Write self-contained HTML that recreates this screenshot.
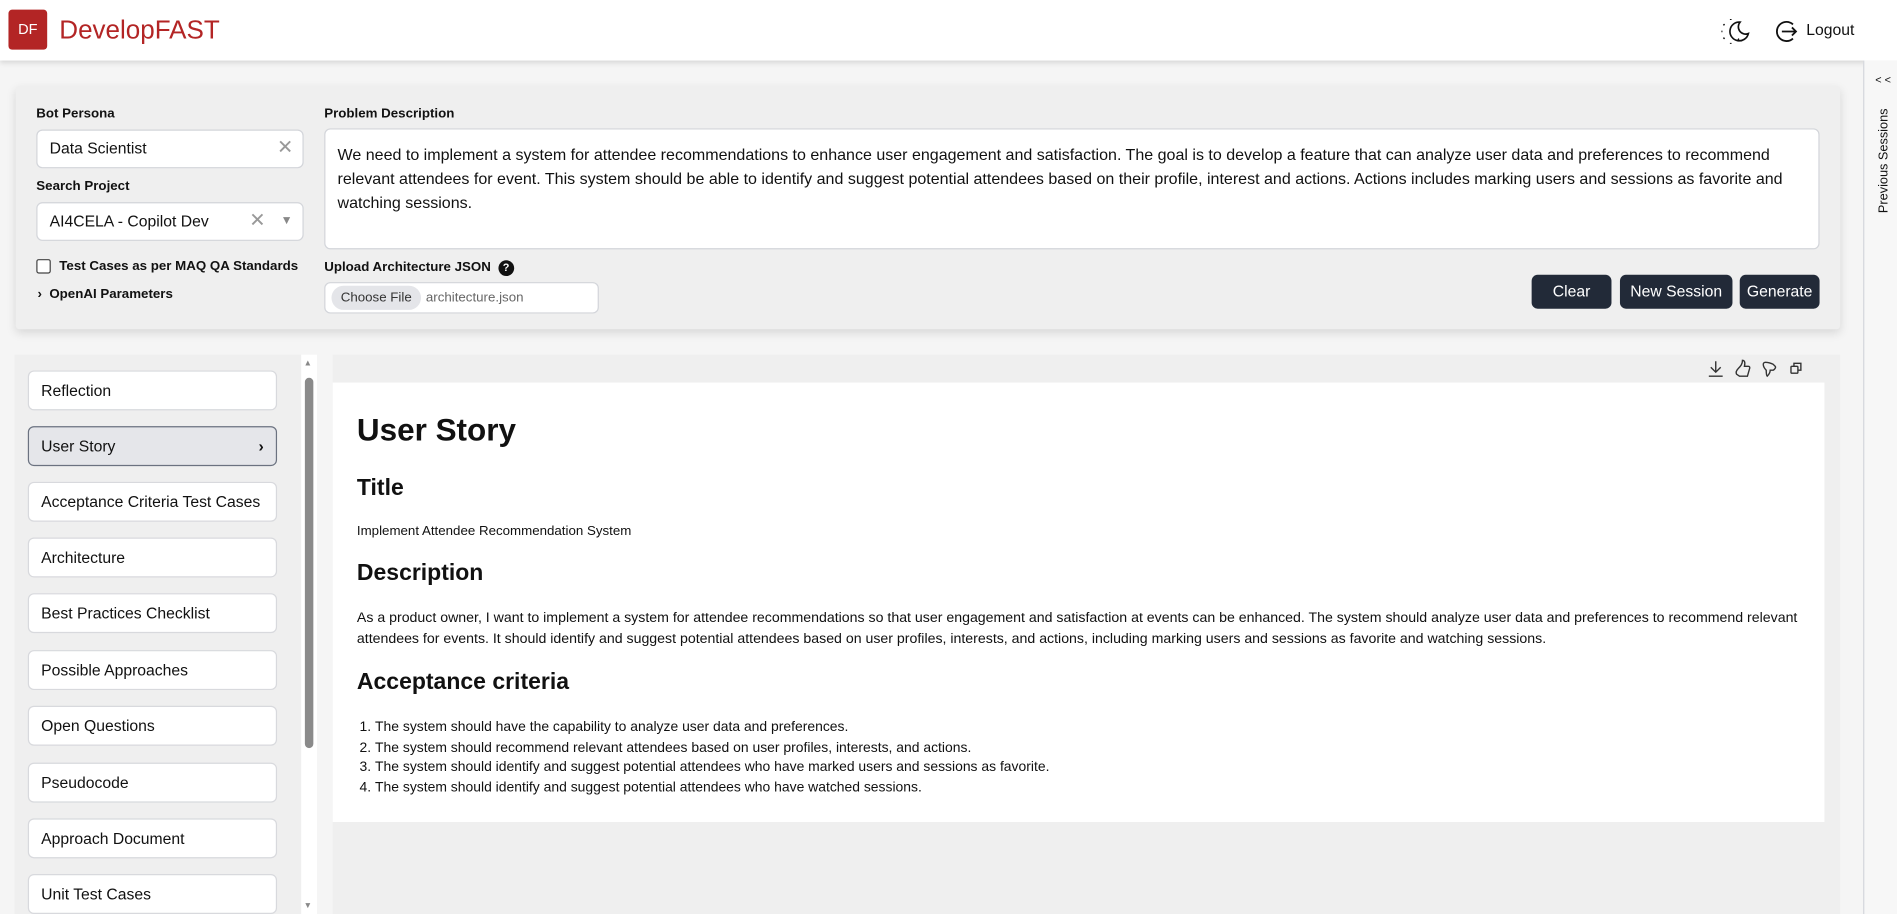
<!DOCTYPE html>
<html><head><meta charset="utf-8"><style>
*{box-sizing:border-box;margin:0;padding:0}
html,body{width:1897px;height:914px;overflow:hidden;background:#f5f5f5}
#w{position:absolute;left:0;top:0;width:1568px;height:755px;transform:scale(1.20982,1.2106);transform-origin:0 0;font-family:"Liberation Sans",sans-serif;color:#111;background:#f5f5f5}
.abs{position:absolute}
.hdr{left:0;top:0;width:1568px;height:50px;background:#fff;box-shadow:0 2px 4px rgba(0,0,0,.12)}
.logo{left:7px;top:8px;width:32px;height:33px;background:#b32525;border-radius:3px;color:#fff;font-size:12px;line-height:33px;text-align:center}
.brand{left:49px;top:9px;font-size:21.5px;color:#b32525;line-height:32px}
.side{left:1540px;top:50px;width:28px;height:705px;background:#f7f7f7;border-left:1px solid #d4d6dc}
.panel{left:13px;top:71px;width:1508px;height:201px;background:#efefef;box-shadow:0 3px 8px rgba(0,0,0,.12);border-radius:3px}
.lbl{font-size:11px;font-weight:bold;color:#111;white-space:nowrap}
.inp{background:#fff;border:1px solid #d3d5da;border-radius:5px;font-size:13px;padding-left:10px;line-height:37px;white-space:nowrap}
.btn{background:#222a38;color:#fff;border-radius:5px;font-size:13px;text-align:center;line-height:28px}
.left{left:12px;top:293px;width:237px;height:462px;background:#efefef}
.item{position:absolute;left:11px;width:206px;height:33px;background:#fff;border:1px solid #d8d9dd;border-radius:5px;font-size:13px;line-height:31px;padding-left:10px;color:#111;white-space:nowrap}
.sb{left:249px;top:293px;width:13px;height:462px;background:#fff}
.main{left:275px;top:293px;width:1246px;height:462px;background:#efefef}
.card{left:275px;top:316px;width:1233px;height:363px;background:#fff}
.card p,.card li{font-size:11px;line-height:16.5px;white-space:nowrap}
</style></head><body><div id="w">
<div class="abs hdr"></div>
<div class="abs logo">DF</div>
<div class="abs brand">DevelopFAST</div>
<svg class="abs" style="left:1421px;top:14px" width="26" height="24" viewBox="0 0 30 28" fill="none" stroke="#111" stroke-width="1.6">
<path d="M20 5a9 9 0 1 0 8 11a7 7 0 0 1-8-11z"/><path d="M11 2v1M11 25v1M2 14h1M4 7l1 1M4 21l1-1M18 21l1 1"/></svg>
<svg class="abs" style="left:1467px;top:16px" width="20" height="20" viewBox="0 0 24 24" fill="none" stroke="#111" stroke-width="1.8">
<path d="M18 5a9.5 9.5 0 1 0 0 14"/><path d="M7 12h14M17 8l4 4-4 4"/></svg>
<div class="abs" style="left:1493px;top:16px;font-size:13px;line-height:18px">Logout</div>

<div class="abs side"></div>
<div class="abs" style="left:1550px;top:61px;font-size:9px">&lt; &lt;</div>
<div class="abs" style="left:1551px;top:176px;transform:rotate(-90deg);transform-origin:0 0;font-size:10.5px;white-space:nowrap">Previous Sessions</div>

<div class="abs panel"></div>
<div class="abs lbl" style="left:30px;top:88px">Bot Persona</div>
<div class="abs inp" style="left:30px;top:107px;width:221px;height:32px;line-height:30px">Data Scientist<span style="position:absolute;left:198px;top:0;color:#999;font-size:16px">✕</span></div>
<div class="abs lbl" style="left:30px;top:148px">Search Project</div>
<div class="abs inp" style="left:30px;top:167px;width:221px;height:32px;line-height:30px">AI4CELA - Copilot Dev<span style="position:absolute;left:175px;top:0;color:#999;font-size:16px">✕</span><span style="position:absolute;left:201px;top:0;color:#888;font-size:10px">▼</span></div>
<div class="abs" style="left:30px;top:214px;width:12px;height:12px;border:1.2px solid #444;border-radius:2px;background:#fff"></div>
<div class="abs lbl" style="left:49px;top:214px">Test Cases as per MAQ QA Standards</div>
<div class="abs lbl" style="left:31px;top:237px">›&nbsp; OpenAI Parameters</div>

<div class="abs lbl" style="left:268px;top:88px">Problem Description</div>
<div class="abs" style="left:268px;top:106px;width:1236px;height:100px;background:#fff;border:1px solid #d3d5da;border-radius:5px;padding:11px 0 0 10px;font-size:13.25px;line-height:20px;white-space:nowrap">We need to implement a system for attendee recommendations to enhance user engagement and satisfaction. The goal is to develop a feature that can analyze user data and preferences to recommend<br>relevant attendees for event. This system should be able to identify and suggest potential attendees based on their profile, interest and actions. Actions includes marking users and sessions as favorite and<br>watching sessions.</div>
<div class="abs lbl" style="left:268px;top:215px">Upload Architecture JSON <span style="display:inline-block;width:13px;height:13px;border-radius:50%;background:#111;color:#fff;font-size:9px;text-align:center;line-height:13px;margin-left:3px">?</span></div>
<div class="abs" style="left:268px;top:233px;width:227px;height:26px;background:#fff;border:1px solid #d3d5da;border-radius:5px"></div>
<div class="abs" style="left:274px;top:236px;width:74px;height:20px;background:#e4e5e9;border-radius:10px;font-size:11px;line-height:20px;text-align:center;color:#333">Choose File</div>
<div class="abs" style="left:352px;top:236px;font-size:11px;line-height:20px;color:#666">architecture.json</div>
<div class="abs btn" style="left:1266px;top:227px;width:66px;height:28px">Clear</div>
<div class="abs btn" style="left:1339px;top:227px;width:93px;height:28px">New Session</div>
<div class="abs btn" style="left:1438px;top:227px;width:66px;height:28px">Generate</div>

<div class="abs left">
<div class="item" style="top:13px">Reflection</div>
<div class="item" style="top:59px;background:#e5e6ea;border-color:#6b7280">User Story<span style="position:absolute;right:10px;top:0;font-weight:bold">›</span></div>
<div class="item" style="top:105px">Acceptance Criteria Test Cases</div>
<div class="item" style="top:151px">Architecture</div>
<div class="item" style="top:197px">Best Practices Checklist</div>
<div class="item" style="top:244px">Possible Approaches</div>
<div class="item" style="top:290px">Open Questions</div>
<div class="item" style="top:337px">Pseudocode</div>
<div class="item" style="top:383px">Approach Document</div>
<div class="item" style="top:429px">Unit Test Cases</div>
</div>
<div class="abs sb"><div style="position:absolute;left:3px;top:19px;width:7px;height:306px;background:#8a8a8a;border-radius:4px"></div>
<div style="position:absolute;left:2px;top:4px;font-size:7px;color:#888">▲</div><div style="position:absolute;left:2px;top:452px;font-size:7px;color:#888">▼</div></div>

<div class="abs main"></div>
<svg class="abs" style="left:1410px;top:295px" width="90" height="20" viewBox="0 0 110 24" fill="none" stroke="#333" stroke-width="1.4">
<path d="M10 4v11M5 10l5 5 5-5M3 19h14"/>
<path d="M33 11c2-2 4-4 4-8 2 0 3 2 2 6h4c1 0 2 1 1 3l-2 7h-8l-3-2c-1-2 0-4 2-6z"/>
<path d="M60 5c2 0 4 0 8 2l2 2c1 1 0 3-2 4h-3c0 2-1 4-3 6-1-1-1-3-1-6-2-2-3-4-3-6 0-1 1-2 2-2z"/>
<rect x="86" y="9" width="7" height="7" rx="1"/><path d="M89 9V6h7v7h-3"/></svg>
<div class="abs card">
<div style="position:absolute;left:20px;top:24px;font-size:26px;font-weight:bold">User Story</div>
<div style="position:absolute;left:20px;top:77px;font-size:19px;font-weight:bold">Title</div>
<p style="position:absolute;left:20px;top:115px">Implement Attendee Recommendation System</p>
<div style="position:absolute;left:20px;top:147px;font-size:19px;font-weight:bold">Description</div>
<p style="position:absolute;left:20px;top:187px;font-size:11.7px">As a product owner, I want to implement a system for attendee recommendations so that user engagement and satisfaction at events can be enhanced. The system should analyze user data and preferences to recommend relevant<br>attendees for events. It should identify and suggest potential attendees based on user profiles, interests, and actions, including marking users and sessions as favorite and watching sessions.</p>
<div style="position:absolute;left:20px;top:237px;font-size:19px;font-weight:bold">Acceptance criteria</div>
<ol style="position:absolute;left:35px;top:277px;padding-left:0">
<li style="font-size:11.5px">The system should have the capability to analyze user data and preferences.</li>
<li style="font-size:11.5px">The system should recommend relevant attendees based on user profiles, interests, and actions.</li>
<li style="font-size:11.5px">The system should identify and suggest potential attendees who have marked users and sessions as favorite.</li>
<li style="font-size:11.5px">The system should identify and suggest potential attendees who have watched sessions.</li>
</ol>
</div>
</div></body></html>
